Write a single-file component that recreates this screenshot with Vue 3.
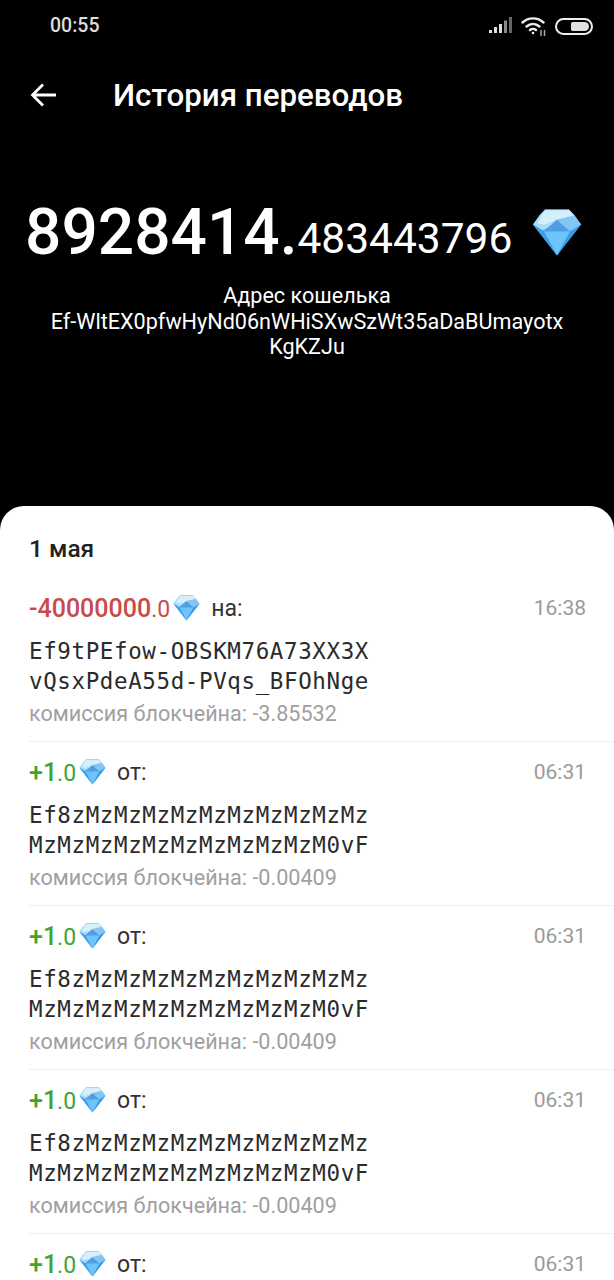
<template>
	<div class="screen">
		<svg width="0" height="0" class="defs">
			<symbol id="gem" viewBox="0 0 50 48">
				<path d="M13 1h24l12 15-24 31L1 16z" fill="#4aa8f0" />
				<path d="M13 1h24l5 5 7 10-10 6-14-9-14 9-10-6 7-10z" fill="#a8dcfb" />
				<path d="M13 2h24l5 6-6 5-11-2-12 5-8-1z" fill="#d5effd" />
				<path d="M25 11 38 23H12z" fill="#4f9fe0" />
				<path d="M25 11 38 23l11-7-7-9z" fill="#82c6f5" />
				<path d="M12 23h26L25 47z" fill="#6cc4fb" />
				<path d="M1 16 12 23l13 24z" fill="#3f9eee" />
				<path d="M49 16 38 23 25 47z" fill="#3c98e8" />
			</symbol>
		</svg>

		<div class="status-bar">
			<span class="clock">00:55</span>
			<div class="status-icons">
				<svg width="24" height="18" viewBox="0 0 24 18">
					<rect x="0" y="13" width="3" height="3" fill="#ddd" />
					<rect x="5" y="10" width="3" height="6" fill="#ddd" />
					<rect x="10" y="7" width="3" height="9" fill="#ddd" />
					<rect x="15" y="3.500" width="3" height="12.500" fill="#8a8a8a" />
					<rect x="20" y="0" width="3" height="16" fill="#666" />
				</svg>
				<svg width="26" height="20" viewBox="0 0 26 20" fill="none" stroke="#eee" stroke-width="2.400" stroke-linecap="round">
					<path d="M1.500 6.500C7.500 1 16.500 1 22.500 6.500" />
					<path d="M5.500 10.500c4-3.500 9-3.500 13 0" />
					<path d="M9 14c2-1.500 4-1.500 6 0" />
					<circle cx="12" cy="17" r="1.300" fill="#eee" stroke="none" />
					<path d="M20 14.500v5M23.500 14.500v5" stroke="#aaa" stroke-width="1.500" />
				</svg>
				<div class="battery"><div class="battery-fill" /></div>
			</div>
		</div>

		<div class="toolbar">
			<svg class="back" width="28" height="24" viewBox="0 0 28 24" fill="none" stroke="#fff" stroke-width="2.800">
				<path d="M2 12h24M13 1.500 2.500 12 13 22.500" />
			</svg>
			<h1 class="title">История переводов</h1>
		</div>

		<div class="balance">
			<span class="balance-int">8928414.</span><span class="balance-frac">483443796</span>
			<svg class="gem-big"><use href="#gem" /></svg>
		</div>

		<div class="wallet">
			<div>Адрес кошелька</div>
			<div>Ef-WltEX0pfwHyNd06nWHiSXwSzWt35aDaBUmayotx</div>
			<div>KgKZJu</div>
		</div>

		<div class="sheet">
			<div class="date">1 мая</div>
			<div v-for="(tx, i) in transfers" :key="i" class="tx">
				<div class="tx-head">
					<span class="amount" :class="tx.out ? 'out' : 'in'">{{ tx.whole }}<small>.0</small></span>
					<svg class="gem-small"><use href="#gem" /></svg>
					<span class="dir">{{ tx.out ? 'на:' : 'от:' }}</span>
					<span class="time">{{ tx.time }}</span>
				</div>
				<template v-if="tx.lines">
					<div class="addr">
						<div>{{ tx.lines[0] }}</div>
						<div>{{ tx.lines[1] }}</div>
					</div>
					<div class="fee">комиссия блокчейна: {{ tx.fee }}</div>
				</template>
			</div>
		</div>
	</div>
</template>

<script setup>
const incoming = {
	whole: '+1',
	out: false,
	time: '06:31',
	lines: ['Ef8zMzMzMzMzMzMzMzMzMzMz', 'MzMzMzMzMzMzMzMzMzMzM0vF'],
	fee: '-0.00409',
};

const transfers = [
	{
		whole: '-40000000',
		out: true,
		time: '16:38',
		lines: ['Ef9tPEfow-OBSKM76A73XX3X', 'vQsxPdeA55d-PVqs_BFOhNge'],
		fee: '-3.85532',
	},
	incoming,
	incoming,
	incoming,
	{ whole: '+1', out: false, time: '06:31' },
];
</script>

<style>
html,
body {
	margin: 0;
	background: #000;
}
</style>

<style scoped>
.screen {
	width: 614px;
	height: 1280px;
	overflow: hidden;
	background: #000;
	color: #fff;
	font-family: Roboto, "Liberation Sans", sans-serif;
}

.defs {
	position: absolute;
}

.status-bar {
	height: 52px;
	padding: 0 21px 0 50px;
	display: flex;
	align-items: center;
	justify-content: space-between;
}

.clock {
	font-size: 19.500px;
	font-weight: 500;
	color: #ddd;
	margin-top: -1px;
}

.status-icons {
	display: flex;
	align-items: center;
	gap: 8px;
}

.battery {
	box-sizing: border-box;
	width: 38px;
	height: 17px;
	border: 2px solid #eee;
	border-radius: 9px;
	padding: 2px;
	display: flex;
	justify-content: flex-end;
}

.battery-fill {
	width: 18px;
	background: #e0e0e0;
	border-radius: 2px 5px 5px 2px;
}

.toolbar {
	height: 86px;
	display: flex;
	align-items: center;
	padding-left: 30px;
	margin-bottom: 50px;
}

.title {
	margin: 0 0 0 55px;
	font-size: 31.300px;
	font-weight: 500;
}

.balance {
	height: 88px;
	display: flex;
	align-items: center;
	padding-left: 25px;
}

.balance-int {
	font-size: 64px;
	font-weight: 500;
}

.balance-frac {
	font-size: 42.500px;
	margin-top: 12px;
}

.gem-big {
	width: 50px;
	height: 49px;
	margin: 0 0 0 20px;
}

.wallet {
	margin-top: 7px;
	text-align: center;
	font-size: 21.600px;
	line-height: 25.500px;
}

.sheet {
	position: absolute;
	top: 506px;
	left: 0;
	width: 614px;
	height: 774px;
	overflow: hidden;
	background: #fff;
	border-radius: 24px 24px 0 0;
	color: #222;
}

.date {
	height: 72px;
	box-sizing: border-box;
	padding: 29px 29px 0;
	font-size: 24.500px;
	font-weight: 500;
	line-height: 28px;
}

.tx {
	margin-left: 29px;
	height: 151px;
	padding: 12px 28px 0 0;
	border-bottom: 1px solid #efefef;
}

.tx-head {
	height: 36px;
	display: flex;
	align-items: center;
}

.amount {
	font-size: 25px;
	font-weight: 500;
}

.amount small {
	font-size: 23px;
	font-weight: 400;
}

.out {
	color: #c94a4a;
}

.in {
	color: #3fa52f;
}

.gem-small {
	width: 27px;
	height: 26px;
	margin-left: 3px;
}

.dir {
	margin-left: 11px;
	font-size: 23px;
	color: #333;
}

.time {
	margin-left: auto;
	font-size: 21px;
	color: #9a9a9a;
}

.addr {
	margin-top: 10px;
	font-family: "DejaVu Sans Mono", "Liberation Mono", monospace;
	font-size: 22.500px;
	letter-spacing: 0.620px;
	line-height: 30px;
	color: #2b2b2b;
}

.fee {
	margin-top: 3px;
	font-size: 21.600px;
	line-height: 30px;
	color: #a0a0a0;
}
</style>
